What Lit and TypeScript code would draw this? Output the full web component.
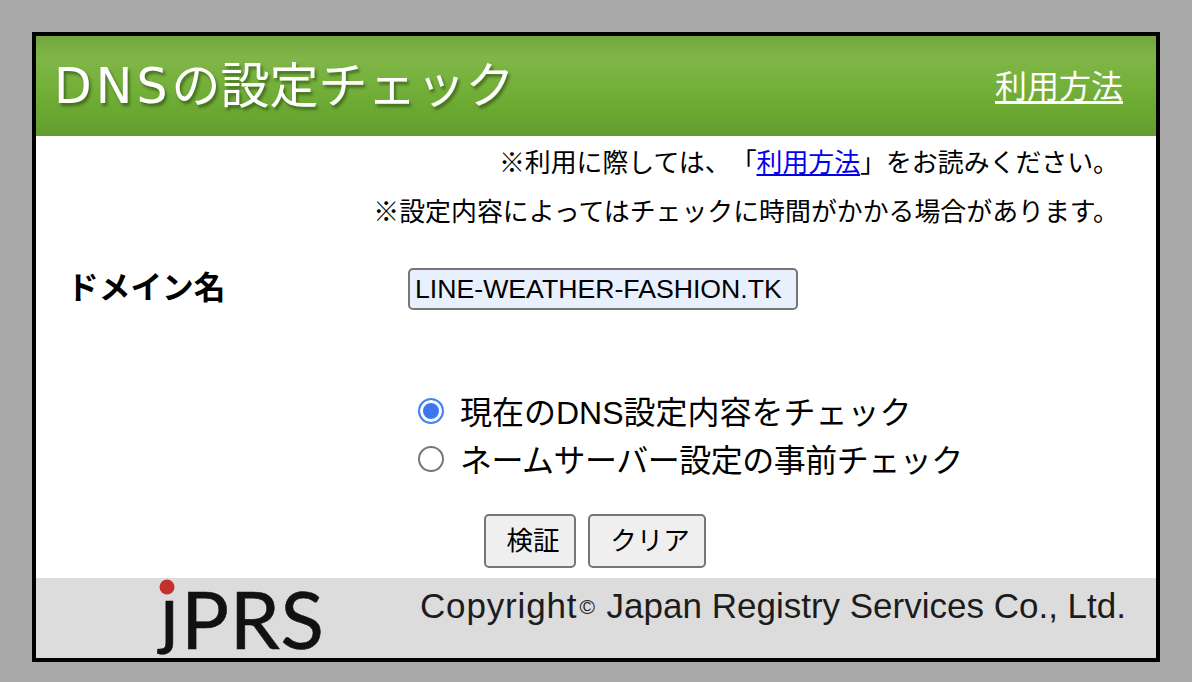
import { LitElement, html, css } from "lit";
import { customElement } from "lit/decorators.js";

@customElement("app-root")
export class AppRoot extends LitElement {
  static styles = css`
    :host { display: block; width: 1192px; height: 682px; background: #a9a9a9; box-sizing: border-box; padding: 32px; overflow: hidden;
      font-family: "Liberation Sans", "Noto Sans CJK JP", sans-serif; color: #000; text-spacing-trim: space-all; }
    .box { box-sizing: border-box; width: 1128px; height: 630px; border: 4px solid #000; background: #fff; display: flex; flex-direction: column; }
    .head { height: 100px; flex: none; display: flex; align-items: center; justify-content: space-between; padding: 0 33px 0 18px;
      background: linear-gradient(#72a63e 0%, #80b648 22%, #74b03a 50%, #6aa832 75%, #629c30 100%); }
    .title { font-family: "DejaVu Sans", "Noto Sans CJK JP", sans-serif; font-size: 49px; color: #fff; white-space: nowrap;
      text-shadow: 2px 3px 3px rgba(30, 60, 10, .55); filter: blur(.5px); margin-top: -10px; }
    .title span { letter-spacing: 4px; }
    .help { font-family: "Noto Sans CJK JP", sans-serif; font-size: 32px; color: #fff; text-decoration: underline; text-underline-offset: 3px; margin-top: -4px; }
    .notes { display: flex; flex-direction: column; align-items: flex-end; padding: 5px 37px 0 0; font-family: "Noto Sans CJK JP", sans-serif; font-size: 25.9px; }
    .notes div { height: 49px; line-height: 40px; white-space: nowrap; }
    .notes a { color: #0000ee; }
    .domain { display: flex; align-items: center; margin-top: 27px; height: 46px; padding-left: 31px; }
    .domain b { width: 341px; padding-bottom: 8px; font-family: "Noto Sans CJK JP", sans-serif; font-size: 31.7px; font-weight: 700; }
    .field { box-sizing: border-box; width: 390px; height: 42px; margin: 0; padding: 0 5px; border: 2px solid #767676; border-radius: 5px; background: #e8f0fe;
      font: 26.67px "Liberation Sans", sans-serif; color: #000; outline: none; }
    .radios { display: flex; flex-direction: column; margin: 74px 0 0 382px; font-size: 32px; }
    .radios label { display: flex; align-items: center; height: 48px; gap: 16px; white-space: nowrap; }
    .tight { letter-spacing: -0.5px; }
    .dot { box-sizing: border-box; width: 26px; height: 26px; margin-top: 2px; border-radius: 50%; border: 2px solid #767676; background: #fff; flex: none; }
    .dot.on { border: 2px solid #4285f4; background: #3b78f0; box-shadow: inset 0 0 0 3px #fff; }
    .btns { display: flex; gap: 12px; margin: 32px 0 0 448px; }
    button { box-sizing: border-box; height: 54px; padding: 0 0 5px 6px; border: 2px solid #767676; border-radius: 5px; background: #efefef; font-family: "Noto Sans CJK JP", sans-serif; font-size: 26.5px; color: #000; }
    .b1 { width: 92px; } .b2 { width: 118px; }
    .foot { flex: 1; margin-top: 10px; background: #dcdcdc; display: flex; justify-content: space-between; padding-right: 30px; min-height: 0; }
    .logo { margin-left: 116px; width: 180px; height: 80px; display: block; overflow: visible; }
    .logo text { font-family: "Lato", "Liberation Sans", sans-serif; fill: #111; stroke: #111; stroke-width: .6px; }
    .logo .j { font-size: 78px; }
    .logo .prs { font-size: 80px; }
    .copy { font-family: "Liberation Sans", sans-serif; font-size: 35px; color: #1c1c1c; padding-top: 8px; white-space: nowrap; }
    .copy span { letter-spacing: .85px; }
    .copy small { font-size: 21px; vertical-align: 4px; margin: 0 2px; }
  `;

  render() {
    return html`<div class="box">
      <div class="head">
        <div class="title"><span>DNS</span>の設定チェック</div>
        <a class="help">利用方法</a>
      </div>
      <div class="notes">
        <div>※利用に際しては、「<a href="#">利用方法</a>」をお読みください。</div>
        <div>※設定内容によってはチェックに時間がかかる場合があります。</div>
      </div>
      <div class="domain"><b>ドメイン名</b><input class="field" .value=${"LINE-WEATHER-FASHION.TK"} /></div>
      <div class="radios">
        <label><i class="dot on"></i><span>現在のDNS設定内容をチェック</span></label>
        <label><i class="dot"></i><span class="tight">ネームサーバー設定の事前チェック</span></label>
      </div>
      <div class="btns"><button class="b1">検証</button><button class="b2">クリア</button></div>
      <div class="foot">
        <svg class="logo" viewBox="0 0 180 80">
          <circle cx="15" cy="9" r="7.5" fill="#c4302b"></circle>
          <text class="j" x="8" y="62">ȷ</text>
          <text class="prs" x="29" y="71" textLength="143" lengthAdjust="spacing">PRS</text>
        </svg>
        <div class="copy"><span>Copyright</span><small>©</small> Japan Registry Services Co., Ltd.</div>
      </div>
    </div>`;
  }
}
